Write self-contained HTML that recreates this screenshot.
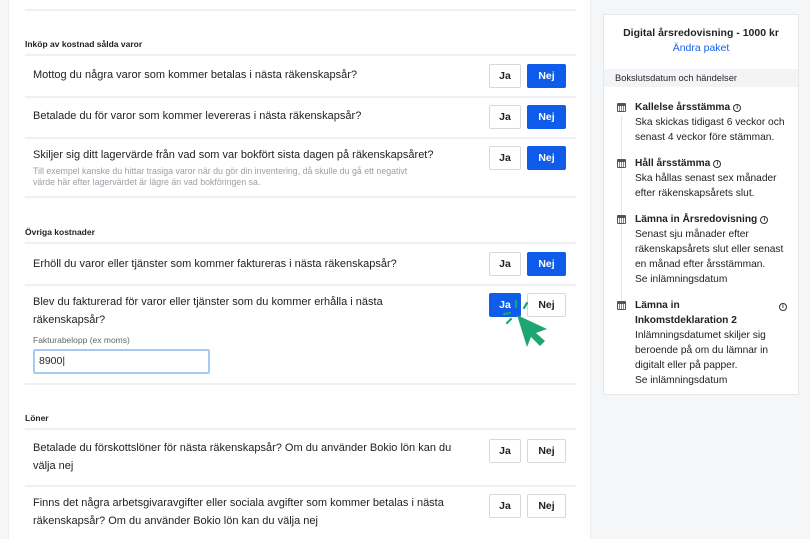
<!DOCTYPE html>
<html><head><meta charset="utf-8"><style>
*{margin:0;padding:0;box-sizing:border-box}
body{width:810px;height:539px;overflow:hidden;background:#f5f6f8;font-family:"Liberation Sans",sans-serif;color:#1f2328;position:relative}
.card{position:absolute;left:8px;top:0;width:583px;height:539px;background:#fff;border-left:1px solid #eceef1;border-right:1px solid #eceef1}
.a{position:absolute}
.ln{position:absolute;left:25px;width:551px;height:2px;background:#eef0f3}
.h{position:absolute;left:25px;font-size:8.5px;font-weight:bold;color:#222}
.q{position:absolute;left:33px;font-size:11px;line-height:18px;color:#222}
.s{position:absolute;left:33px;font-size:8.8px;line-height:11px;color:#9aa0a6}
.b{position:absolute;height:24px;border:1px solid #d5d8dc;border-radius:2px;background:#fff;font-size:10.5px;font-weight:bold;text-align:center;line-height:22px;color:#222}
.b.on{background:#0f5bea;border-color:#0f5bea;color:#fff}
.ja{left:489px;width:32px}.nej{left:527px;width:39px}
.side{position:absolute;left:603px;top:14px;width:196px;height:381px;background:#fff;border:1px solid #e6e8eb}
.it{position:absolute;left:31px;font-size:10.2px;line-height:15px;color:#222;width:160px}
.it b{display:block}
.cal{position:absolute;left:13px;width:9px;height:9px;border:1px solid #555;border-top:3px solid #555;border-radius:1px;background:repeating-linear-gradient(90deg,#fff 0 1px,#888 1px 2px)}
.vl{position:absolute;left:17px;width:1px;background:#e6e8eb}
.i{display:inline-block;width:8px;height:8px;border:1px solid #333;border-radius:50%;font-size:6px;line-height:6px;text-align:center;vertical-align:1px;font-weight:bold;margin-left:3px}
</style></head><body>
<div class="card"></div>
<div class="ln" style="top:9px"></div>
<div class="h" style="top:39px">Inköp av kostnad sålda varor</div>
<div class="ln" style="top:54px"></div>
<div class="q" style="top:66px">Mottog du några varor som kommer betalas i nästa räkenskapsår?</div>
<div class="b ja" style="top:64px">Ja</div><div class="b nej on" style="top:64px">Nej</div>
<div class="ln" style="top:96px"></div>
<div class="q" style="top:107px">Betalade du för varor som kommer levereras i nästa räkenskapsår?</div>
<div class="b ja" style="top:105px">Ja</div><div class="b nej on" style="top:105px">Nej</div>
<div class="ln" style="top:137px"></div>
<div class="q" style="top:146px">Skiljer sig ditt lagervärde från vad som var bokfört sista dagen på räkenskapsåret?</div>
<div class="s" style="top:166px">Till exempel kanske du hittar trasiga varor när du gör din inventering, då skulle du gå ett negativt<br>värde här efter lagervärdet är lägre än vad bokföringen sa.</div>
<div class="b ja" style="top:146px">Ja</div><div class="b nej on" style="top:146px">Nej</div>
<div class="ln" style="top:196px"></div>
<div class="h" style="top:227px">Övriga kostnader</div>
<div class="ln" style="top:242px"></div>
<div class="q" style="top:255px">Erhöll du varor eller tjänster som kommer faktureras i nästa räkenskapsår?</div>
<div class="b ja" style="top:252px">Ja</div><div class="b nej on" style="top:252px">Nej</div>
<div class="ln" style="top:284px"></div>
<div class="q" style="top:293px">Blev du fakturerad för varor eller tjänster som du kommer erhålla i nästa<br>räkenskapsår?</div>
<div class="s" style="top:335px;color:#666;font-size:8.5px">Fakturabelopp (ex moms)</div>
<div class="a" style="left:33px;top:349px;width:177px;height:25px;border:2px solid #a9c9f5;border-radius:2px;font-size:10.5px;line-height:21px;padding-left:4px">8900|</div>
<div class="b ja on" style="top:293px">Ja</div><div class="b nej" style="top:293px">Nej</div>
<svg class="a" style="left:500px;top:298px" width="50" height="50" viewBox="0 0 50 50">
<g stroke="#1ea672" stroke-width="2.2" stroke-linecap="round"><line x1="16" y1="3" x2="16" y2="9"/><line x1="4" y1="16" x2="10" y2="15"/><line x1="7" y1="25" x2="11" y2="21"/><line x1="27" y1="5" x2="24" y2="10"/></g>
<path d="M17 17 L27 49 L31 39 L40 48 L45 43 L36 35 L47 31 Z" fill="#1ea672"/></svg>
<div class="ln" style="top:383px"></div>
<div class="h" style="top:413px">Löner</div>
<div class="ln" style="top:428px"></div>
<div class="q" style="top:439px">Betalade du förskottslöner för nästa räkenskapsår? Om du använder Bokio lön kan du<br>välja nej</div>
<div class="b ja" style="top:439px">Ja</div><div class="b nej" style="top:439px">Nej</div>
<div class="ln" style="top:485px"></div>
<div class="q" style="top:494px">Finns det några arbetsgivaravgifter eller sociala avgifter som kommer betalas i nästa<br>räkenskapsår? Om du använder Bokio lön kan du välja nej</div>
<div class="b ja" style="top:494px">Ja</div><div class="b nej" style="top:494px">Nej</div>

<div class="side">
<div class="a" style="left:0;width:194px;top:12px;text-align:center;font-size:10.5px;font-weight:bold">Digital årsredovisning - 1000 kr</div>
<div class="a" style="left:0;width:194px;top:27px;text-align:center;font-size:10.5px;color:#1a62e8">Ändra paket</div>
<div class="a" style="left:0;top:54px;width:194px;height:18px;background:#f3f4f6;font-size:9.3px;line-height:18px;padding-left:11px">Bokslutsdatum och händelser</div>
<div class="vl" style="top:100px;height:190px"></div>
<div class="cal" style="top:88px"></div>
<div class="it" style="top:85px"><b>Kallelse årsstämma<span class="i">i</span></b>Ska skickas tidigast 6 veckor och senast 4 veckor före stämman.</div>
<div class="cal" style="top:144px"></div>
<div class="it" style="top:141px"><b>Håll årsstämma<span class="i">i</span></b>Ska hållas senast sex månader efter räkenskapsårets slut.</div>
<div class="cal" style="top:200px"></div>
<div class="it" style="top:197px"><b>Lämna in Årsredovisning<span class="i">i</span></b>Senast sju månader efter räkenskapsårets slut eller senast en månad efter årsstämman.<br>Se inlämningsdatum</div>
<div class="cal" style="top:286px"></div>
<div class="it" style="top:283px;width:140px"><b>Lämna in Inkomstdeklaration 2</b>Inlämningsdatumet skiljer sig beroende på om du lämnar in digitalt eller på papper.<br>Se inlämningsdatum</div>
<span class="i a" style="left:172px;top:288px">i</span>
</div>
</body></html>
